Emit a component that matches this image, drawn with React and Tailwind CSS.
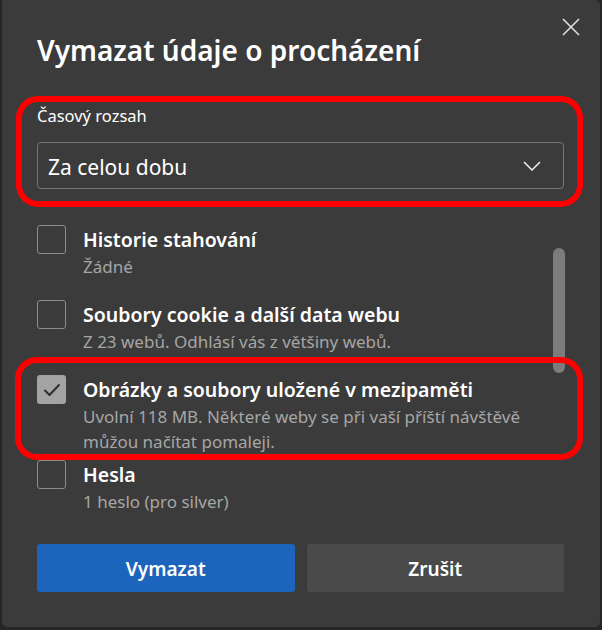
const items = [
  { title: "Historie stahování", desc: ["Žádné"], checked: false, h: "h-[75px]" },
  { title: "Soubory cookie a další data webu", desc: ["Z 23 webů. Odhlásí vás z většiny webů."], checked: false, h: "h-[75px]" },
  {
    title: "Obrázky a soubory uložené v mezipaměti",
    desc: ["Uvolní 118 MB. Některé weby se při vaší příští návštěvě", "můžou načítat pomaleji."],
    checked: true,
    h: "h-[85px]",
  },
  { title: "Hesla", desc: ["1 heslo (pro silver)"], checked: false, h: "h-[75px]" },
];

const CheckBox = ({ checked }) =>
  checked ? (
    <div className="w-[29px] h-[29px] shrink-0 rounded-[3px] bg-[#a3a3a3] flex items-center justify-center">
      <svg width="18" height="14" viewBox="0 0 18 14" fill="none">
        <path d="M2 7.5 L6.5 12 L16 2" stroke="#2e2e2e" strokeWidth="2" strokeLinecap="round" strokeLinejoin="round" />
      </svg>
    </div>
  ) : (
    <div className="w-[29px] h-[29px] shrink-0 rounded-[3px] border border-[#8c8c8c]" />
  );

export default function App() {
  return (
    <div className="w-[602px] h-[630px] bg-[#262626] font-['Noto_Sans',sans-serif]">
      <div className="relative ml-[2px] w-[598px] h-[627px] bg-[#3b3b3b] rounded-b-[5px] rounded-tr-[5px] pl-[35px] pr-[36px] pt-[32px]">
        <button className="absolute right-[20px] top-[18px] w-[18px] h-[18px]">
          <svg width="18" height="18" viewBox="0 0 18 18" fill="none">
            <path d="M1 1 L17 17 M17 1 L1 17" stroke="#e6e6e6" strokeWidth="1.5" />
          </svg>
        </button>

        <h1 className="text-[28px] leading-[36px] font-semibold text-white">
          Vymazat údaje o procházení
        </h1>

        <p className="mt-[38px] text-[16.5px] leading-[20px] text-white">Časový rozsah</p>
        <div className="mt-[16px] h-[47px] border border-[#767676] rounded-[4px] flex items-center justify-between pl-[10px] pr-[22px]">
          <span className="pt-[4px] text-[21px] text-white">Za celou dobu</span>
          <svg width="18" height="10" viewBox="0 0 18 10" fill="none">
            <path d="M1 1 L9 9 L17 1" stroke="#f0f0f0" strokeWidth="1.5" />
          </svg>
        </div>

        <div className="relative mt-[36px] h-[310px]">
          {items.map((it) => (
            <div key={it.title} className={`flex gap-[17px] ${it.h}`}>
              <CheckBox checked={it.checked} />
              <div className="pt-[3px]">
                <p className="text-[19.5px] leading-[24px] font-semibold text-white">{it.title}</p>
                <div className="mt-[2px]">
                  {it.desc.map((d) => (
                    <p key={d} className="text-[17px] leading-[25px] text-[#a6a6a6]">{d}</p>
                  ))}
                </div>
              </div>
            </div>
          ))}
          <div className="absolute right-[-1px] top-[23px] w-[12px] h-[125px] rounded-full bg-[#7c7c7c]" />
        </div>

        <div className="mt-[9px] flex gap-[12px]">
          <button className="flex-1 h-[48px] pt-[3px] rounded-[3px] bg-[#1d65bc] text-white text-[19px] font-semibold">
            Vymazat
          </button>
          <button className="flex-1 h-[48px] pt-[3px] rounded-[3px] bg-[#4a4a4a] text-white text-[19px] font-semibold">
            Zrušit
          </button>
        </div>

        <div className="absolute left-[14px] top-[96px] w-[567px] h-[111px] border-[6px] border-[#ff0000] rounded-[22px]" />
        <div className="absolute left-[13px] top-[357px] w-[568px] h-[103px] border-[6px] border-[#ff0000] rounded-[22px]" />
      </div>
    </div>
  );
}
